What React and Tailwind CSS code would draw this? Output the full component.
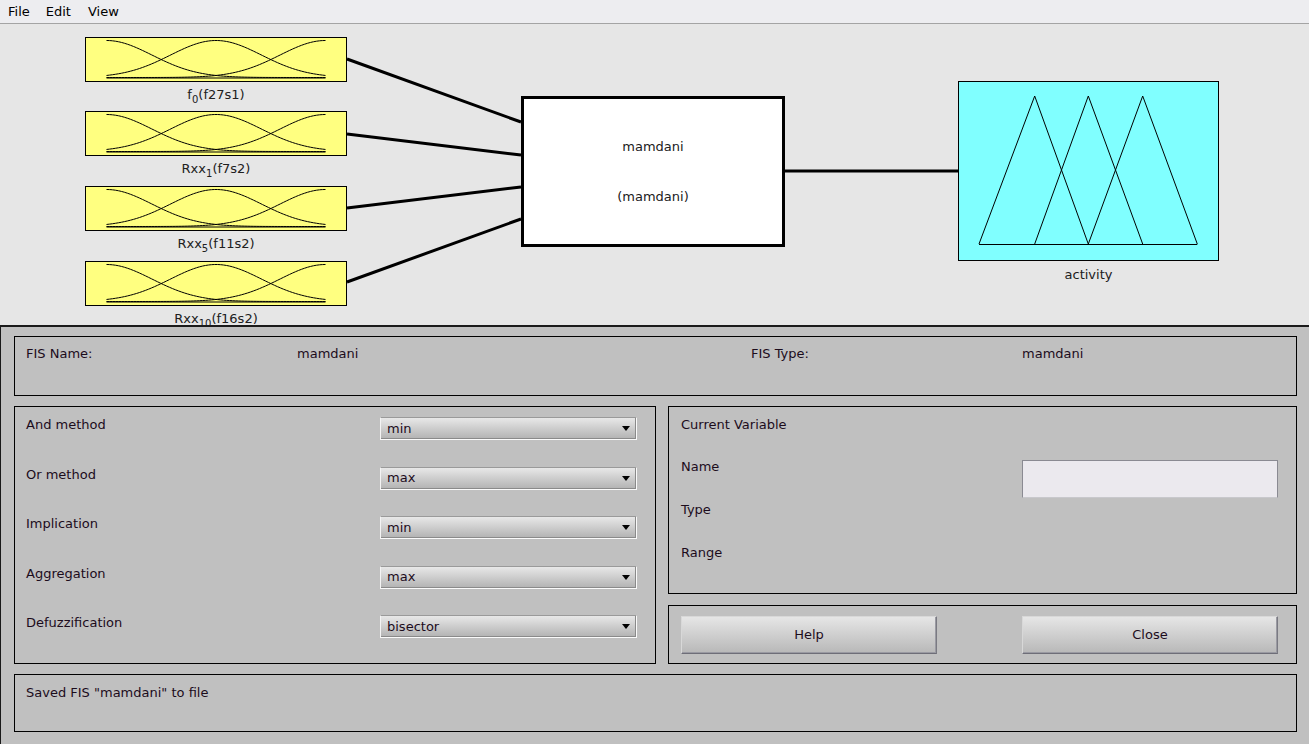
import React from 'react';

// gaussian membership curves for the input boxes (box-local coordinates)
const X0 = 20.5;
const X1 = 239.5;
const YTOP = 2.5;
const YBOT = 39.5;
const SIGMA = 45.5;

function gaussPath(c) {
  const pts = [];
  for (let x = X0; x <= X1 + 0.01; x += 1.5) {
    const v = Math.exp(-((x - c) ** 2) / (2 * SIGMA * SIGMA));
    pts.push(`${x.toFixed(1)},${(YBOT - v * (YBOT - YTOP)).toFixed(2)}`);
  }
  return 'M' + pts.join(' L');
}

const CURVES = [gaussPath(X0), gaussPath((X0 + X1) / 2), gaussPath(X1)];

const INPUTS = [
  { top: 13, name: 'f', sub: '0', rest: '(f27s1)' },
  { top: 87, name: 'Rxx', sub: '1', rest: '(f7s2)' },
  { top: 162, name: 'Rxx', sub: '5', rest: '(f11s2)' },
  { top: 237, name: 'Rxx', sub: '10', rest: '(f16s2)' },
];

const LINKS = [
  [347, 35, 521, 98],
  [347, 110, 521, 131],
  [347, 184, 521, 163],
  [347, 258, 521, 195],
  [784, 147, 958, 147],
];

const METHODS = [
  ['And method', 'min'],
  ['Or method', 'max'],
  ['Implication', 'min'],
  ['Aggregation', 'max'],
  ['Defuzzification', 'bisector'],
];

function InputNode({ top, name, sub, rest }) {
  return (
    <div className="absolute left-[85px] w-[262px]" style={{ top }}>
      <div className="h-[45px] border border-black bg-[#ffff80]">
        <svg width="260" height="43" className="block">
          {CURVES.map((d, i) => (
            <path key={i} d={d} fill="none" stroke="#000" strokeWidth="1" />
          ))}
          <line x1={X0} y1={YBOT + 0.5} x2={X1} y2={YBOT + 0.5} stroke="#000" strokeWidth="1" />
        </svg>
      </div>
      <div className="mt-[5px] text-center leading-[15px] text-[#202020]">
        {name}
        <sub className="bottom-[-4px] text-[10px]">{sub}</sub>
        {rest}
      </div>
    </div>
  );
}

function Select({ value }) {
  return (
    <div className="flex h-[23px] w-[257px] items-center justify-between border border-t-[#9a9a9a] border-l-[#f4f4f4] border-b-[#fafafa] border-r-[#fafafa] bg-gradient-to-b from-[#e8e8e8] to-[#b2b2b2] pl-[6px] pr-[6px] text-[#1c0c1c] shadow-[inset_-1px_-1px_0_#8a8a8a]">
      <span>{value}</span>
      <svg width="8" height="5" viewBox="0 0 8 5">
        <path d="M0 0 H8 L4 5 Z" fill="#000" />
      </svg>
    </div>
  );
}

function Button({ children }) {
  return (
    <div className="flex h-[38px] w-[256px] items-center justify-center border border-t-[#d8d8d8] border-l-[#d8d8d8] border-b-[#6e6e78] border-r-[#7a7a82] bg-gradient-to-b from-[#e6e6e6] to-[#b8b8b8] text-[#1c0c1c] shadow-[inset_-1px_-1px_0_#9a9aa2]">
      {children}
    </div>
  );
}

export default function App() {
  return (
    <div className="flex h-[744px] w-[1309px] flex-col overflow-hidden font-['DejaVu_Sans',sans-serif] text-[13px] text-black">
      {/* menu bar */}
      <div className="flex h-[24px] shrink-0 items-center border-b border-[#a4a4a4] bg-[#ededf0]">
        <span className="px-[8px]">File</span>
        <span className="px-[8px]">Edit</span>
        <span className="px-[8px] ml-[1px]">View</span>
      </div>

      {/* diagram canvas */}
      <div className="relative h-[301px] shrink-0 overflow-hidden bg-[#e6e6e6]">
        <svg className="absolute inset-0" width="1309" height="301">
          {LINKS.map(([x1, y1, x2, y2], i) => (
            <line key={i} x1={x1} y1={y1} x2={x2} y2={y2} stroke="#000" strokeWidth="3" />
          ))}
        </svg>

        {INPUTS.map((n) => (
          <InputNode key={n.top} {...n} />
        ))}

        <div className="absolute left-[521px] top-[72px] flex h-[151px] w-[264px] flex-col items-center border-[3px] border-black bg-white pt-[40px] text-[#202020]">
          <div className="leading-[15px]">mamdani</div>
          <div className="mt-[35px] leading-[15px]">(mamdani)</div>
        </div>

        <div className="absolute left-[958px] top-[57px] w-[261px]">
          <div className="h-[180px] border border-black bg-[#80ffff]">
            <svg width="259" height="178" className="block">
              <polyline points="20,162 75.7,14 129.3,162" fill="none" stroke="#000" strokeWidth="1" />
              <polyline points="75.7,162 129.3,14 183.7,162" fill="none" stroke="#000" strokeWidth="1" />
              <polyline points="129.3,162 183.7,14 238.3,162" fill="none" stroke="#000" strokeWidth="1" />
              <line x1="20" y1="162.5" x2="238.3" y2="162.5" stroke="#000" strokeWidth="1" />
            </svg>
          </div>
          <div className="mt-[6px] text-center leading-[15px] text-[#202020]">activity</div>
        </div>
      </div>

      {/* control panel */}
      <div className="flex flex-1 flex-col gap-[10px] border-l border-t-2 border-[#1a1a1a] bg-[#c0c0c0] pb-[12px] pl-[13px] pr-[12px] pt-[9px] text-[#1c0c1c]">
        <div className="grid h-[60px] grid-cols-[271px_454px_271px_1fr] border border-black pl-[11px] pt-[9px] leading-[15px]">
          <span>FIS Name:</span>
          <span>mamdani</span>
          <span>FIS Type:</span>
          <span>mamdani</span>
        </div>

        <div className="flex h-[258px] gap-[12px]">
          <div className="flex w-[642px] flex-col gap-[26.5px] border border-black pl-[11px] pt-[10px]">
            {METHODS.map(([label, value]) => (
              <div key={label} className="flex h-[23px] items-start">
                <span className="w-[354px] leading-[15px]">{label}</span>
                <Select value={value} />
              </div>
            ))}
          </div>

          <div className="flex flex-1 flex-col gap-[11px]">
            <div className="flex h-[188px] justify-between border border-black pl-[12px] pr-[18px] pt-[10px]">
              <div className="flex flex-col gap-[28px] leading-[15px]">
                <span>Current Variable</span>
                <span className="mt-[-1px]">Name</span>
                <span>Type</span>
                <span>Range</span>
              </div>
              <div className="mt-[43px] h-[38px] w-[256px] border border-[#8a8a92] border-b-[#c8c8cc] bg-[#ebe9ee]" />
            </div>
            <div className="flex flex-1 items-center justify-between border border-black pl-[12px] pr-[18px]">
              <Button>Help</Button>
              <Button>Close</Button>
            </div>
          </div>
        </div>

        <div className="flex-1 border border-black pl-[11px] pt-[10px] leading-[15px]">
          Saved FIS "mamdani" to file
        </div>
      </div>
    </div>
  );
}
